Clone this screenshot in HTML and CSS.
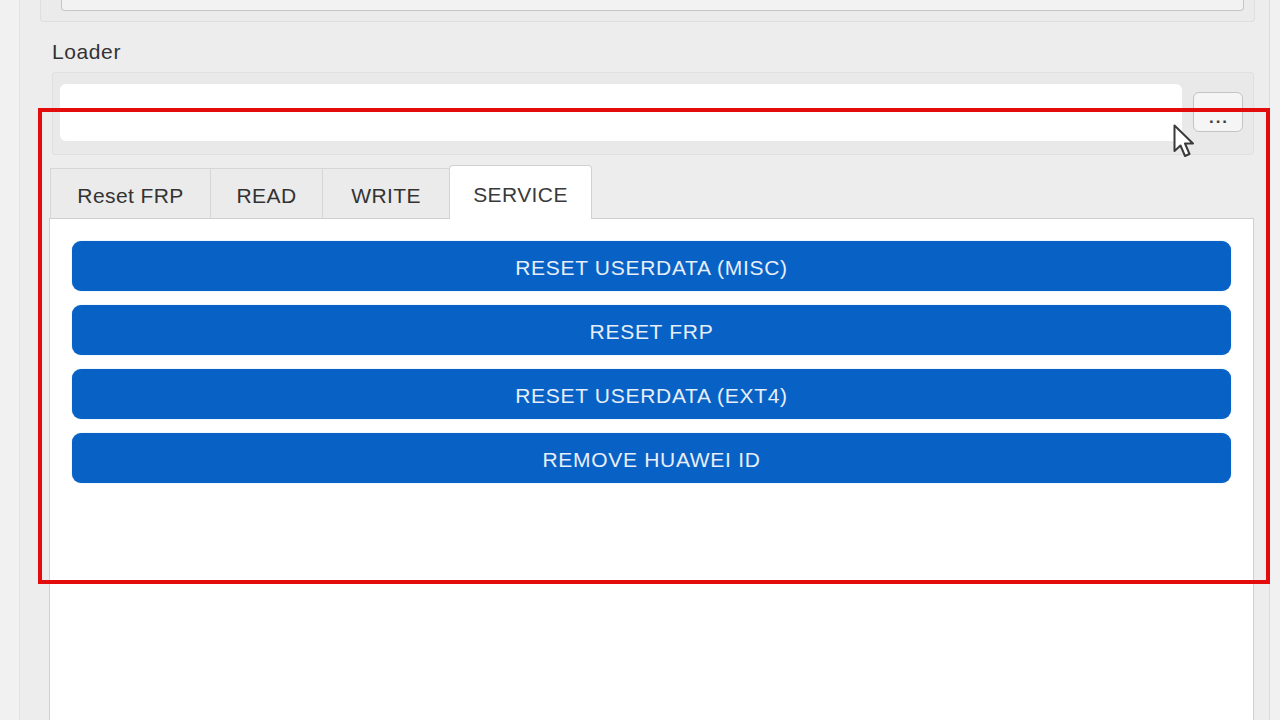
FILE: index.html
```html
<!DOCTYPE html>
<html>
<head>
<meta charset="utf-8">
<link rel="stylesheet" href="styles.css">
</head>
<body>
<div class="frame">
  <div class="topgroup"><div class="topfield"></div></div>
  <div class="col">
    <div class="label">Loader</div>
    <div class="loader">
      <div class="field"></div>
      <div class="browse">...</div>
    </div>
    <div class="tabs">
      <div class="tab t1">Reset FRP</div>
      <div class="tab t2">READ</div>
      <div class="tab t3">WRITE</div>
      <div class="tab active t4">SERVICE</div>
    </div>
    <div class="pane">
      <div class="btn">RESET USERDATA (MISC)</div>
      <div class="btn">RESET FRP</div>
      <div class="btn">RESET USERDATA (EXT4)</div>
      <div class="btn">REMOVE HUAWEI ID</div>
    </div>
  </div>
</div>
<div class="highlight"></div>
<svg class="cursor" width="22" height="36" viewBox="0 0 22 36">
  <path d="M1.5 1.5 L1.5 27 L7.5 21.5 L12 32 L16.5 30 L12 19.5 L20 19.5 Z" fill="#ffffff" stroke="#3a3a3a" stroke-width="2" stroke-linejoin="round"/>
</svg>
</body>
</html>
```

FILE: styles.css
```css
html, body {
  margin: 0;
  padding: 0;
  width: 1280px;
  height: 720px;
  overflow: hidden;
  background: #f1f1f1;
  font-family: "Liberation Sans", Arial, sans-serif;
}
.frame {
  margin-left: 19px;
  width: 1251px;
  height: 720px;
  background: #ededed;
  border-left: 1px solid #e2e2e2;
  border-right: 1px solid #dcdcdc;
  box-sizing: border-box;
}
.topgroup {
  margin-left: 20px;
  width: 1215px;
  height: 22px;
  border: 1px solid #dedede;
  border-top: none;
  border-radius: 0 0 4px 4px;
  box-sizing: border-box;
  background: #ebebeb;
}
.topfield {
  margin-left: 20px;
  width: 1183px;
  height: 11px;
  border: 1px solid #c6c6c6;
  border-top: none;
  border-radius: 0 0 4px 4px;
  box-sizing: border-box;
  background: #f2f2f2;
}
.col {
  margin-left: 29px;
  width: 1205px;
  display: flex;
  flex-direction: column;
}
.label {
  margin-top: 18px;
  padding-left: 3px;
  font-size: 21px;
  line-height: 24px;
  letter-spacing: 0.6px;
  color: #333;
}
.loader {
  margin-top: 8px;
  margin-left: 3px;
  width: 1202px;
  height: 83px;
  box-sizing: border-box;
  background: #e9e9e9;
  border: 1px solid #e0e0e0;
  border-radius: 3px;
  display: flex;
  align-items: flex-start;
  padding: 11px 0 0 7px;
}
.field {
  width: 1122px;
  height: 57px;
  background: #ffffff;
  border-radius: 6px;
}
.browse {
  margin-left: 11px;
  margin-top: 8px;
  width: 50px;
  height: 40px;
  box-sizing: border-box;
  border: 1px solid #c4c4c4;
  border-radius: 6px;
  background: #f5f5f5;
  color: #3c3c3c;
  font-size: 17px;
  font-weight: bold;
  letter-spacing: 2px;
  display: flex;
  align-items: flex-end;
  justify-content: center;
  padding-bottom: 5px;
  padding-left: 2px;
  line-height: 16px;
}
.tabs {
  margin-top: 10px;
  margin-left: 1px;
  height: 53px;
  display: flex;
  align-items: flex-end;
  position: relative;
  z-index: 1;
}
.tab {
  height: 50px;
  box-sizing: border-box;
  background: #ebebeb;
  border: 1px solid #d6d6d6;
  border-bottom: none;
  border-right: none;
  font-size: 21px;
  letter-spacing: 0.4px;
  color: #333;
  display: flex;
  align-items: center;
  justify-content: center;
  padding-top: 5px;
}
.t1 { width: 160px; }
.t2 { width: 112px; }
.t3 { width: 127px; }
.t4 { width: 143px; }
.tab.active {
  height: 54px;
  margin-bottom: -1px;
  background: #ffffff;
  border: 1px solid #d2d2d2;
  border-bottom: none;
  border-radius: 4px 4px 0 0;
  color: #3a3a3a;
  padding-top: 4px;
}
.pane {
  width: 1205px;
  height: 520px;
  box-sizing: border-box;
  background: #ffffff;
  border: 1px solid #cfcfcf;
  padding: 22px 22px 0 22px;
  display: flex;
  flex-direction: column;
  gap: 14px;
}
.btn {
  height: 50px;
  box-sizing: border-box;
  padding-top: 4px;
  background: #0862c6;
  border-radius: 9px;
  color: #e6eef9;
  font-size: 21px;
  letter-spacing: 0.7px;
  display: flex;
  align-items: center;
  justify-content: center;
  box-shadow: 0 0 1px #7fb0e6;
}
.highlight {
  position: absolute;
  left: 38px;
  top: 108px;
  width: 1232px;
  height: 476px;
  box-sizing: border-box;
  border: 4px solid #e30b0b;
}
.cursor {
  position: absolute;
  left: 1173px;
  top: 124px;
}
```
